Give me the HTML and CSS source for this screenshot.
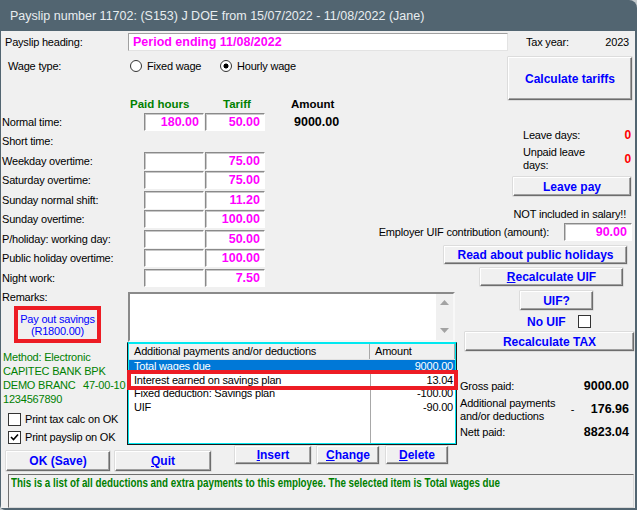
FILE: index.html
```html
<!DOCTYPE html>
<html>
	<head>
		<meta charset="UTF-8">
		<title>Payslip</title>
		<link rel="stylesheet" href="styles.css">
	</head>
	<body>
		<section class="window">
			<div class="titlebar">Payslip number 11702: (S153) J DOE from 15/07/2022 - 11/08/2022 (Jane)</div>
			<section class="client">
				<div class="head-row">
					<span class="head-lbl">Payslip heading:</span>
					<div class="edit heading-edit">Period ending 11/08/2022</div>
					<span class="tax-lbl">Tax year:</span>
					<span class="tax-val">2023</span>
				</div>

				<div class="upper">
					<div class="pay">
						<div class="wage-row">
							<span class="wage-lbl">Wage type:</span>
							<span class="radio"><i class="dot"></i>Fixed wage</span>
							<span class="radio on"><i class="dot"></i>Hourly wage</span>
						</div>
						<div class="colheads">
							<span class="ch-hours">Paid hours</span>
							<span class="ch-tariff">Tariff</span>
							<span class="ch-amount">Amount</span>
						</div>
						<div class="grid">
							<span class="rl">Normal time:</span><div class="edit box">180.00</div><div class="edit box">50.00</div><span class="amt">9000.00</span>
							<span class="rl">Short time:</span><span></span><span></span><span></span>
							<span class="rl">Weekday overtime:</span><div class="edit box"></div><div class="edit box">75.00</div><span></span>
							<span class="rl">Saturday overtime:</span><div class="edit box"></div><div class="edit box">75.00</div><span></span>
							<span class="rl">Sunday normal shift:</span><div class="edit box"></div><div class="edit box">11.20</div><span></span>
							<span class="rl">Sunday overtime:</span><div class="edit box"></div><div class="edit box">100.00</div><span></span>
							<span class="rl">P/holiday: working day:</span><div class="edit box"></div><div class="edit box">50.00</div><span></span>
							<span class="rl">Public holiday overtime:</span><div class="edit box"></div><div class="edit box">100.00</div><span></span>
							<span class="rl">Night work:</span><div class="edit box"></div><div class="edit box">7.50</div><span></span>
						</div>
					</div>

					<div class="side">
						<div class="btn calc">Calculate tariffs</div>
						<div class="leave">
							<span>Leave days:</span><span class="red">0</span>
							<span>Unpaid leave days:</span><span class="red">0</span>
						</div>
						<div class="btn leave-pay">Leave pay</div>
						<div class="note">NOT included in salary!!</div>
						<div class="uif-row">
							<span>Employer UIF contribution (amount):</span>
							<div class="edit box uif-edit">90.00</div>
						</div>
						<div class="btn read">Read about public holidays</div>
						<div class="btn recalc-uif"><u>R</u>ecalculate UIF</div>
					</div>
				</div>

				<div class="lower">
					<div class="sidebar">
						<div class="remarks-lbl">Remarks:</div>
						<div class="payout">
							<span>Pay out savings</span>
							<span>(R1800.00)</span>
						</div>
						<div class="bank">
							<div>Method: Electronic</div>
							<div>CAPITEC BANK BPK</div>
							<div class="branch"><span class="bname">DEMO BRANC</span><span>47-00-10</span></div>
							<div>1234567890</div>
						</div>
						<div class="check-row"><i class="cbox"></i>Print tax calc on OK</div>
						<div class="check-row"><i class="cbox">
							<svg width="11" height="11" viewBox="0 0 11 11"><path d="M2 5 L4.5 7.5 L9 2.5" fill="none" stroke="#000" stroke-width="1.6"/></svg>
						</i>Print payslip on OK</div>
					</div>

					<div class="middle">
						<div class="remarks-box">
							<div class="scroll">
								<svg width="9" height="5" viewBox="0 0 9 5"><path d="M0 5 L4.5 0 L9 5 Z" fill="#a3a3a3"/></svg>
								<svg width="9" height="5" viewBox="0 0 9 5"><path d="M0 0 L4.5 5 L9 0 Z" fill="#a3a3a3"/></svg>
							</div>
						</div>
						<div class="list">
							<div class="lhead">
								<span>Additional payments and/or deductions</span>
								<span>Amount</span>
							</div>
							<div class="rows">
								<div class="row sel"><span>Total wages due</span><span>9000.00</span></div>
								<div class="row"><span>Interest earned on savings plan</span><span>13.04</span></div>
								<div class="row"><span>Fixed deduction: Savings plan</span><span>-100.00</span></div>
								<div class="row"><span>UIF</span><span>-90.00</span></div>
							</div>
							<div class="mark"></div>
						</div>
					</div>

					<div class="summary">
						<div class="btn uif-q">UIF?</div>
						<div class="no-uif">No UIF <i class="cbox"></i></div>
						<div class="btn recalc-tax">Recalculate TAX</div>
						<div class="totals">
							<span>Gross paid:</span><span></span><b>9000.00</b>
							<span>Additional payments<br>and/or deductions</span><span class="dash">-</span><b>176.96</b>
							<span>Nett paid:</span><span></span><b>8823.04</b>
						</div>
					</div>
				</div>

				<div class="actions">
					<div class="btn ok">OK (Save)</div>
					<div class="btn quit"><u>Q</u>uit</div>
					<div class="btn insert"><u>I</u>nsert</div>
					<div class="btn change"><u>C</u>hange</div>
					<div class="btn delete"><u>D</u>elete</div>
				</div>

				<div class="status"><span>This is a list of all deductions and extra payments to this employee. The selected item is Total wages due</span></div>
			</section>
		</section>
	</body>
</html>
```

FILE: styles.css
```css
body{
	margin: 0;
	background: #c3c9cc;
	font-family: "Liberation Sans", Arial, sans-serif;
	font-size: 11px;
	letter-spacing: -0.2px;
	color: #000;
}
.window{
	width: 637px;
	height: 510px;
	background: #526571;
	border-radius: 0 8px 0 5px;
	display: flex;
	flex-direction: column;
	overflow: hidden;
}
.titlebar{
	flex: none;
	height: 31px;
	line-height: 32px;
	padding-left: 10px;
	color: #e8edf0;
	font-size: 12.5px;
	letter-spacing: 0;
	white-space: nowrap;
}
.client{
	flex: 1;
	margin: 0 2px 2px 1px;
	background: #f0f0f0;
	display: flex;
	flex-direction: column;
}

/* edits and buttons */
.edit{
	box-sizing: border-box;
	background: #fff;
	border: 1px solid;
	border-color: #a0a0a0 #e3e3e3 #e3e3e3 #a0a0a0;
	color: #ff00ff;
	font-weight: bold;
	font-size: 12.5px;
	letter-spacing: 0;
	white-space: nowrap;
}
.box{
	height: 18px;
	line-height: 16px;
	text-align: right;
	padding-right: 4px;
	border-color: #8a8a8a #fff #fff #8a8a8a;
	box-shadow: inset 1px 1px #c8c8c8;
}
.btn{
	box-sizing: border-box;
	background: #f0f0f0;
	border: 1px solid;
	border-color: #fff #6d6d6d #6d6d6d #fff;
	box-shadow: inset -1px -1px #a0a0a0, 0 0 0 0.5px #c8c8c8;
	color: #0000ff;
	font-weight: bold;
	font-size: 12px;
	letter-spacing: 0;
	display: flex;
	align-items: center;
	justify-content: center;
	white-space: nowrap;
}
.btn u{
	text-underline-offset: 1px;
}
.cbox{
	display: flex;
	align-items: center;
	justify-content: center;
	width: 13px;
	height: 13px;
	box-sizing: border-box;
	border: 1px solid #333;
	background: #fff;
}

/* heading row */
.head-row{
	display: flex;
	align-items: center;
	height: 18px;
	margin-top: 2px;
}
.head-lbl{
	width: 123px;
	padding-left: 4px;
}
.heading-edit{
	width: 380px;
	height: 18px;
	line-height: 16px;
	padding-left: 4px;
}
.tax-lbl{
	margin-left: 18px;
}
.tax-val{
	margin-left: auto;
	margin-right: 6px;
}

/* upper part */
.upper{
	display: flex;
	height: 237px;
}
.pay{
	width: 343px;
}
.wage-row{
	display: flex;
	align-items: center;
	height: 16px;
	margin-top: 7px;
	padding-left: 7px;
}
.wage-lbl{
	width: 122px;
}
.radio{
	display: flex;
	align-items: center;
	gap: 5px;
	width: 90px;
}
.dot{
	width: 12px;
	height: 12px;
	box-sizing: border-box;
	border: 1px solid #333;
	border-radius: 50%;
	background: #fff;
}
.radio.on .dot{
	background: radial-gradient(circle, #000 0 2.2px, #fff 2.8px);
}
.colheads{
	display: flex;
	height: 15px;
	line-height: 15px;
	margin-top: 23px;
	padding-left: 129px;
	font-weight: bold;
	font-size: 11.5px;
	letter-spacing: 0;
}
.ch-hours{
	width: 93px;
	color: #008000;
}
.ch-tariff{
	width: 68px;
	color: #008000;
}
.grid{
	display: grid;
	grid-template-columns: 142px 60px 60px 1fr;
	column-gap: 1px;
	grid-auto-rows: 19.5px;
	align-items: center;
}
.rl{
	padding-left: 1px;
	white-space: nowrap;
}
.amt{
	padding-left: 28px;
	font-weight: bold;
	font-size: 12.5px;
	letter-spacing: 0;
}

.side{
	flex: 1;
	display: flex;
	flex-direction: column;
	align-items: flex-start;
}
.calc{
	margin: 6px 0 0 164px;
	width: 124px;
	height: 43px;
}
.leave{
	margin: 29px 0 0 179px;
	width: 108px;
	display: grid;
	grid-template-columns: 80px 1fr;
	row-gap: 4px;
	line-height: 13px;
}
.red{
	color: #ff0000;
	font-weight: bold;
	font-size: 12px;
	justify-self: end;
	align-self: center;
}
.leave-pay{
	margin: 5px 0 0 169px;
	width: 118px;
	height: 19px;
}
.note{
	align-self: flex-end;
	margin: 12px 9px 0 0;
	line-height: 13px;
}
.uif-row{
	align-self: flex-end;
	display: flex;
	align-items: center;
	gap: 15px;
	margin: 2px 3px 0 0;
	white-space: nowrap;
}
.uif-edit{
	width: 68px;
}
.read{
	margin: 5px 0 0 100px;
	width: 183px;
	height: 18px;
}
.recalc-uif{
	margin: 4px 0 0 136px;
	width: 143px;
	height: 18px;
}

/* lower part */
.lower{
	display: flex;
	height: 157px;
}
.sidebar{
	width: 126px;
	overflow: hidden;
	white-space: nowrap;
}
.remarks-lbl{
	margin-top: 3px;
	padding-left: 1px;
	line-height: 13px;
}
.payout{
	margin: 2px 0 0 13px;
	width: 87px;
	height: 37px;
	box-sizing: border-box;
	border: 4px solid #ed1c24;
	color: #0000ff;
	line-height: 12px;
	display: flex;
	flex-direction: column;
	align-items: center;
	justify-content: center;
}
.bank{
	margin-top: 7px;
	padding-left: 2px;
	color: #008000;
	line-height: 14px;
}
.branch{
	display: flex;
}
.bname{
	flex: none;
	width: 80px;
}
.check-row{
	display: flex;
	align-items: center;
	gap: 4px;
	height: 16px;
	padding-left: 7px;
	margin-top: 5px;
}
.check-row + .check-row{
	margin-top: 2px;
}

.middle{
	width: 330px;
}
.remarks-box{
	margin: 4px 0 0 1px;
	width: 327px;
	height: 50px;
	box-sizing: border-box;
	background: #fff;
	border: 2px solid;
	border-color: #8a8a8a #f8f8f8 #f8f8f8 #8a8a8a;
	display: flex;
	justify-content: flex-end;
}
.scroll{
	width: 17px;
	background: #f0f0f0;
	display: flex;
	flex-direction: column;
	justify-content: space-between;
	align-items: center;
	padding: 6px 0 7px;
	box-sizing: border-box;
}
.list{
	position: relative;
	height: 103px;
	box-sizing: border-box;
	border: 1px solid #1a1a1a;
	border-top-color: #00e8f0;
	box-shadow: inset 0 0 0 1px #00e8f0;
	background: #fff;
	padding: 1px;
	display: flex;
	flex-direction: column;
}
.lhead{
	display: grid;
	grid-template-columns: 241px 1fr;
	height: 15px;
	line-height: 15px;
	background: #f0f0f0;
	border-bottom: 1px solid #e0e0e0;
}
.lhead span{
	padding-left: 5px;
	border-right: 1px solid #a8a8a8;
	white-space: nowrap;
}
.rows{
	flex: 1;
	background: linear-gradient(to right, transparent 241px, #a8a8a8 241px, #a8a8a8 242px, transparent 242px);
}
.row{
	display: grid;
	grid-template-columns: 241px 1fr;
	height: 13.5px;
	line-height: 13.5px;
	white-space: nowrap;
}
.row span:first-child{
	padding-left: 5px;
}
.row span:last-child{
	text-align: right;
	padding-right: 2px;
}
.row.sel{
	background: #0078d7;
	color: #fff;
}
.mark{
	position: absolute;
	left: -1px;
	top: 27px;
	width: 331px;
	height: 20px;
	box-sizing: border-box;
	border: 4px solid #ed1c24;
}

.summary{
	flex: 1;
	display: flex;
	flex-direction: column;
	align-items: flex-start;
}
.uif-q{
	margin: 3px 0 0 63px;
	width: 73px;
	height: 19px;
}
.no-uif{
	margin: 5px 0 0 70px;
	height: 13px;
	display: flex;
	align-items: center;
	gap: 12px;
	color: #0000ff;
	font-weight: bold;
	font-size: 12px;
	letter-spacing: 0;
}
.recalc-tax{
	margin: 4px 0 0 8px;
	width: 169px;
	height: 19px;
}
.totals{
	align-self: stretch;
	margin-top: 29px;
	padding: 0 6px 0 3px;
	display: grid;
	grid-template-columns: 1fr 16px auto;
	row-gap: 3.5px;
	line-height: 13px;
	align-items: center;
	white-space: nowrap;
}
.totals b{
	text-align: right;
	font-size: 12.5px;
	letter-spacing: 0;
}
.dash{
	padding-left: 3px;
}

/* bottom */
.actions{
	display: flex;
	align-items: flex-start;
	height: 29px;
}
.ok{
	margin: 6px 0 0 5px;
	width: 104px;
	height: 20px;
}
.quit{
	margin: 6px 0 0 5px;
	width: 96px;
	height: 20px;
}
.insert{
	margin: 1px 0 0 24px;
	width: 76px;
	height: 18px;
}
.change{
	margin: 1px 0 0 6px;
	width: 62px;
	height: 18px;
}
.delete{
	margin: 1px 0 0 7px;
	width: 62px;
	height: 18px;
}
.status{
	flex: 1;
	margin: 0 1px 0 7px;
	border: 1px solid;
	border-color: #707070 #d8d8d8 #d8d8d8 #707070;
	padding: 0 2px;
	line-height: 15px;
	color: #008000;
	font-weight: bold;
	font-size: 13px;
	letter-spacing: 0;
	white-space: nowrap;
	overflow: hidden;
}
.status span{
	display: inline-block;
	transform: scaleX(0.755);
	transform-origin: left center;
}
```
